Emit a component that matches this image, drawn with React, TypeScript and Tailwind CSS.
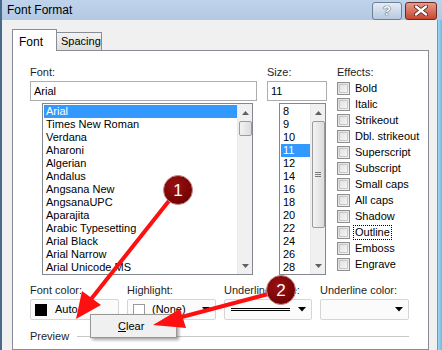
import React from "react";

const fonts = [
  "Arial",
  "Times New Roman",
  "Verdana",
  "Aharoni",
  "Algerian",
  "Andalus",
  "Angsana New",
  "AngsanaUPC",
  "Aparajita",
  "Arabic Typesetting",
  "Arial Black",
  "Arial Narrow",
  "Arial Unicode MS",
];

const sizes = ["8", "9", "10", "11", "12", "14", "16", "18", "20", "22", "24", "26", "28"];

const effects = [
  "Bold",
  "Italic",
  "Strikeout",
  "Dbl. strikeout",
  "Superscript",
  "Subscript",
  "Small caps",
  "All caps",
  "Shadow",
  "Outline",
  "Emboss",
  "Engrave",
];

function DropArrow() {
  return (
    <svg width="8" height="5" viewBox="0 0 8 5" className="shrink-0">
      <path d="M0 0H8L4 4.5Z" fill="#000" />
    </svg>
  );
}

function ScrollBar({ thumbH, grip }: { thumbH: number; grip?: boolean }) {
  return (
    <div className="flex w-[15px] flex-col items-center border-l border-[#e9e9e9] bg-[#f0f0f0]">
      <div className="flex h-[17px] w-full items-center justify-center">
        <svg width="7" height="4" viewBox="0 0 7 4">
          <path d="M0 4L3.5 0L7 4Z" fill="#606060" />
        </svg>
      </div>
      <div
        className="flex w-[13px] items-center justify-center rounded-[2px] border border-[#9b9b9b] bg-gradient-to-r from-[#f3f3f3] to-[#dcdcdc]"
        style={{ height: thumbH }}
      >
        {grip && (
          <div className="flex flex-col gap-[1px]">
            <div className="h-[1px] w-[6px] bg-[#7a7a7a]" />
            <div className="h-[1px] w-[6px] bg-[#7a7a7a]" />
            <div className="h-[1px] w-[6px] bg-[#7a7a7a]" />
          </div>
        )}
      </div>
      <div className="flex-1" />
      <div className="flex h-[17px] w-full items-center justify-center">
        <svg width="7" height="4" viewBox="0 0 7 4">
          <path d="M0 0H7L3.5 4Z" fill="#606060" />
        </svg>
      </div>
    </div>
  );
}

export default function App() {
  return (
    <div
      className="relative flex h-[350px] w-[442px] flex-col overflow-hidden bg-[#f0f0f0] text-[11px] text-black"
      style={{ fontFamily: '"Liberation Sans", Arial, sans-serif' }}
    >
      {/* title bar */}
      <div className="flex h-[25px] items-center border-l-2 border-[#4a6a8c] bg-gradient-to-b from-[#bfd4eb] to-[#b3cae4] pl-[5px] pr-[5px]">
        <span className="text-[12px] leading-none">Font Format</span>
        <div className="ml-auto flex items-center gap-[3px] pt-[1px]">
          <div className="flex h-[18px] w-[30px] items-center justify-center rounded-[3px] border border-[#6e8097] bg-gradient-to-b from-[#e4ecf5] to-[#b7c9de]">
            <span className="text-[13px] font-bold leading-none text-white [text-shadow:0_0_1px_#333,0_0_1px_#333]">?</span>
          </div>
          <div className="flex h-[18px] w-[32px] items-center justify-center rounded-[3px] border border-[#6b2b22] bg-gradient-to-b from-[#e79a8c] to-[#c5452e]">
            <svg width="14" height="11" viewBox="0 0 14 11">
              <path d="M2 1.5L12 9.5M12 1.5L2 9.5" stroke="#4a1a14" strokeWidth="4" strokeLinecap="round" />
              <path d="M2 1.5L12 9.5M12 1.5L2 9.5" stroke="#fff" strokeWidth="2.4" strokeLinecap="round" />
            </svg>
          </div>
        </div>
      </div>

      {/* body */}
      <div className="flex flex-1">
        <div className="w-[2px] bg-[#4a6a8c]" />
        <div className="flex flex-1 flex-col pl-[10px] pt-[9px]">
          {/* tabs */}
          <div className="flex h-[21px] items-end">
            <div className="relative z-10 -mb-[1px] flex h-[22px] w-[45px] items-start border border-b-0 border-[#898c95] bg-white pl-[6px] pt-[3px]">
              <span className="text-[12px]">Font</span>
            </div>
            <div className="flex h-[18px] w-[45px] items-center border border-b-0 border-l-0 border-[#898c95] bg-gradient-to-b from-[#f2f2f2] to-[#dedede] pl-[4px]">
              <span>Spacing</span>
            </div>
          </div>

          {/* panel */}
          <div className="flex h-[300px] w-[417px] flex-col border border-[#898c95] bg-white pl-[17px] pt-[14px]">
            <div className="flex gap-[10px]">
              {/* font column */}
              <div className="flex w-[227px] flex-col">
                <div className="h-[14px] leading-[14px] text-[#1e1e1e]">Font:</div>
                <div className="mt-[2px] flex h-[20px] items-center border border-[#abadb3] pl-[3px]">Arial</div>
                <div className="ml-[12px] mr-[4px] mt-[2px] flex h-[172px] border border-[#828790]">
                  <div className="flex flex-1 flex-col p-[1px] pr-0">
                    {fonts.map((f, i) => (
                      <div
                        key={f}
                        className={
                          i === 0
                            ? "h-[13px] bg-[#3399ff] pl-[2px] leading-[13px] text-white"
                            : "h-[13px] pl-[2px] leading-[13px]"
                        }
                      >
                        {f}
                      </div>
                    ))}
                  </div>
                  <ScrollBar thumbH={15} />
                </div>
              </div>

              {/* size column */}
              <div className="flex w-[60px] flex-col">
                <div className="h-[14px] leading-[14px] text-[#1e1e1e]">Size:</div>
                <div className="mt-[2px] flex h-[20px] items-center border border-[#abadb3] pl-[3px]">11</div>
                <div className="ml-[12px] mr-[1px] mt-[2px] flex h-[172px] border border-[#828790]">
                  <div className="flex flex-1 flex-col p-[1px] pr-0">
                    {sizes.map((s, i) => (
                      <div
                        key={s}
                        className={
                          i === 3
                            ? "h-[13px] bg-[#3399ff] pl-[2px] leading-[13px] text-white"
                            : "h-[13px] pl-[2px] leading-[13px]"
                        }
                      >
                        {s}
                      </div>
                    ))}
                  </div>
                  <ScrollBar thumbH={107} grip />
                </div>
              </div>

              {/* effects column */}
              <div className="flex flex-col">
                <div className="h-[14px] leading-[14px] text-[#1e1e1e]">Effects:</div>
                <div className="mt-[1px] flex flex-col">
                  {effects.map((e) => (
                    <div key={e} className="flex h-[16px] items-center gap-[3px]">
                      <div className="h-[13px] w-[13px] border border-[#8e8f8f] bg-gradient-to-br from-[#dcdcdc] to-[#f7f7f7] p-[1px]">
                        <div className="h-full w-full border border-[#c8c8c8] bg-gradient-to-br from-[#e2e2e2] to-[#f4f4f4]" />
                      </div>
                      <span
                        className={
                          e === "Outline"
                            ? "border border-dotted border-black px-[1px] leading-[13px]"
                            : "px-[2px] leading-[13px]"
                        }
                      >
                        {e}
                      </span>
                    </div>
                  ))}
                </div>
              </div>
            </div>

            {/* colour / underline row */}
            <div className="mt-[8px] flex gap-[8px]">
              <div className="flex w-[89px] flex-col">
                <div className="h-[14px] leading-[14px] text-[#1e1e1e]">Font color:</div>
                <div className="mt-[2px] flex h-[21px] items-center rounded-[2px] border border-[#d5d5d5] bg-[#fbfbfb] pl-[4px]">
                  <div className="h-[12px] w-[12px] bg-black" />
                  <span className="ml-[8px]">Auto</span>
                </div>
              </div>
              <div className="flex w-[89px] flex-col">
                <div className="h-[14px] leading-[14px] text-[#1e1e1e]">Highlight:</div>
                <div className="mt-[2px] flex h-[21px] items-center rounded-[2px] border border-[#d5d5d5] bg-[#fbfbfb] pl-[5px] pr-[5px]">
                  <div className="h-[12px] w-[12px] border border-[#9a9a9a] bg-white" />
                  <span className="ml-[7px]">(None)</span>
                  <div className="ml-auto">
                    <DropArrow />
                  </div>
                </div>
              </div>
              <div className="flex w-[88px] flex-col">
                <div className="h-[14px] leading-[14px] text-[#1e1e1e]">Underline style:</div>
                <div className="mt-[2px] flex h-[21px] items-center rounded-[2px] border border-[#d5d5d5] bg-[#fbfbfb] pl-[6px] pr-[5px]">
                  <div className="flex w-[59px] flex-col gap-[1px]">
                    <div className="h-[1px] bg-black" />
                    <div className="h-[1px] bg-black" />
                  </div>
                  <div className="ml-auto">
                    <DropArrow />
                  </div>
                </div>
              </div>
              <div className="flex w-[89px] flex-col">
                <div className="h-[14px] leading-[14px] text-[#1e1e1e]">Underline color:</div>
                <div className="mt-[2px] flex h-[21px] items-center justify-end rounded-[2px] border border-[#d5d5d5] bg-[#fbfbfb] pr-[5px]">
                  <DropArrow />
                </div>
              </div>
            </div>

            {/* preview */}
            <div className="mt-[9px] flex items-center">
              <span className="h-[14px] leading-[14px] text-[#1e1e1e]">Preview</span>
              <div className="ml-[8px] h-[1px] w-[332px] bg-[#c8c8c8]" />
            </div>
          </div>
        </div>
        <div className="flex w-[13px] flex-col">
          <div className="flex flex-1">
            <div className="flex-1" />
            <div className="w-[1px] bg-[#8a9098]" />
            <div className="w-[4px] bg-gradient-to-r from-[#9fd6f2] to-[#66bce8]" />
          </div>
        </div>
      </div>

      {/* context menu */}
      <div className="absolute left-[90px] top-[314px] flex h-[24px] w-[87px] items-center border border-[#979797] bg-[#f0f0f0] pl-[27px] shadow-[2px_2px_3px_rgba(0,0,0,0.35)]">
        <span>
          <span className="underline">C</span>lear
        </span>
      </div>

      {/* annotations */}
      <svg className="pointer-events-none absolute left-0 top-0" width="442" height="350" viewBox="0 0 442 350">
        <defs>
          <radialGradient id="badge" cx="0.4" cy="0.35" r="0.7">
            <stop offset="0" stopColor="#9a1212" />
            <stop offset="1" stopColor="#6e0000" />
          </radialGradient>
        </defs>
        <line x1="172" y1="197" x2="88" y2="303" stroke="#ff1010" strokeWidth="4" strokeLinecap="round" />
        <path d="M76 319L82 291L101 305Z" fill="#ff1010" />
        <line x1="272" y1="293" x2="178" y2="318" stroke="#ff1010" strokeWidth="4" strokeLinecap="round" />
        <path d="M153 325L180 309L186 328Z" fill="#ff1010" />
        <circle cx="178" cy="190" r="14.5" fill="url(#badge)" stroke="#c98b8b" strokeWidth="1" />
        <text x="178" y="196" textAnchor="middle" fill="#fff" fontSize="17" fontFamily="Liberation Sans, Arial, sans-serif">1</text>
        <circle cx="281" cy="290" r="14.5" fill="url(#badge)" stroke="#c98b8b" strokeWidth="1" />
        <text x="281" y="296" textAnchor="middle" fill="#fff" fontSize="17" fontFamily="Liberation Sans, Arial, sans-serif">2</text>
      </svg>
    </div>
  );
}
